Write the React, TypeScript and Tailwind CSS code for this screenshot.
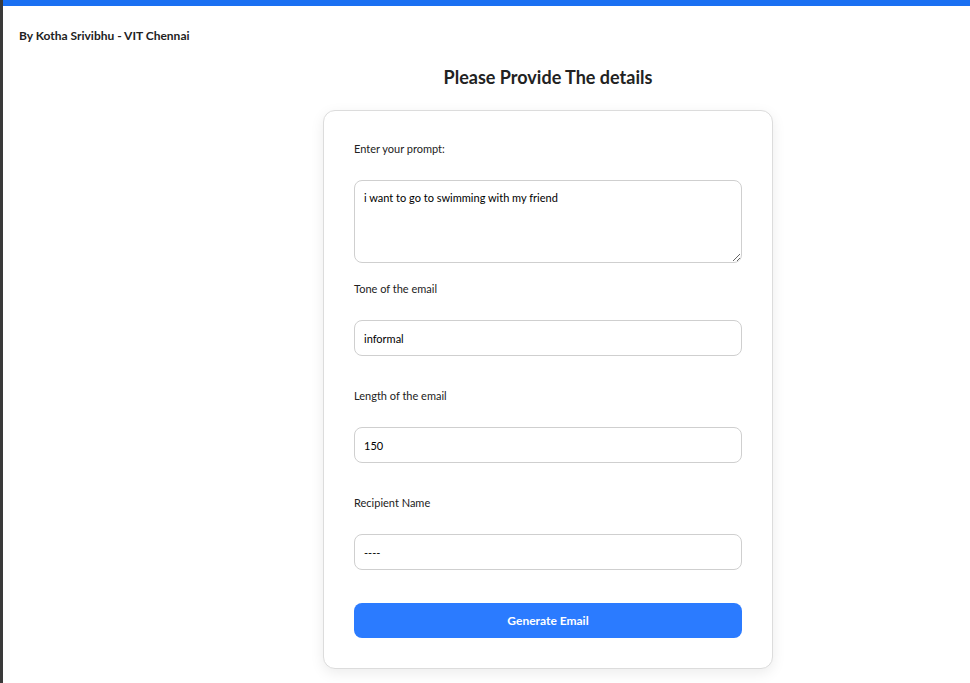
import React from 'react';

const labelCls = 'text-[11px] leading-4 text-[#222]';
const inputCls =
  'w-full h-9 rounded-lg border border-[#cfcfcf] bg-white px-[9px] text-[11px] text-black outline-none';

const App = () => {
  return (
    <div
      className="min-h-screen bg-white border-l-[3px] border-[#3a3a3a]"
      style={{ fontFamily: 'Lato, "Noto Sans", sans-serif' }}
    >
      <div className="h-[6px] bg-[#1a70f2]" />

      <div className="pl-4 pt-[22px] text-[12px] leading-4 font-bold text-[#222]">
        By Kotha Srivibhu - VIT Chennai
      </div>

      <div className="pl-[123px] flex flex-col items-center">
        <h1 className="mt-[21px] text-[18px] leading-6 font-bold text-[#222]">
          Please Provide The details
        </h1>

        <form
          className="mt-[21px] w-[450px] rounded-xl border border-[#dcdcdc] bg-white px-[30px] pt-[30px] pb-[30px] shadow-[0_4px_14px_rgba(0,0,0,0.08)] flex flex-col"
          onSubmit={(e) => e.preventDefault()}
        >
          <label className={labelCls}>Enter your prompt:</label>
          <textarea
            className="mt-[23px] w-full h-[83px] rounded-lg border border-[#cfcfcf] bg-white px-[9px] py-[9px] text-[11px] leading-4 text-black outline-none resize-y block"
            defaultValue="i want to go to swimming with my friend"
          />

          <label className={`${labelCls} mt-[18px]`}>Tone of the email</label>
          <input className={`${inputCls} mt-[23px]`} defaultValue="informal" />

          <label className={`${labelCls} mt-8`}>Length of the email</label>
          <input className={`${inputCls} mt-[23px]`} defaultValue="150" />

          <label className={`${labelCls} mt-8`}>Recipient Name</label>
          <input className={`${inputCls} mt-[23px]`} defaultValue="----" />

          <button
            type="submit"
            className="mt-[33px] h-[35px] w-full rounded-lg bg-[#2b7bff] text-[12px] font-bold text-white"
          >
            Generate Email
          </button>
        </form>
        <div className="h-4" />
      </div>
    </div>
  );
};

export default App;
